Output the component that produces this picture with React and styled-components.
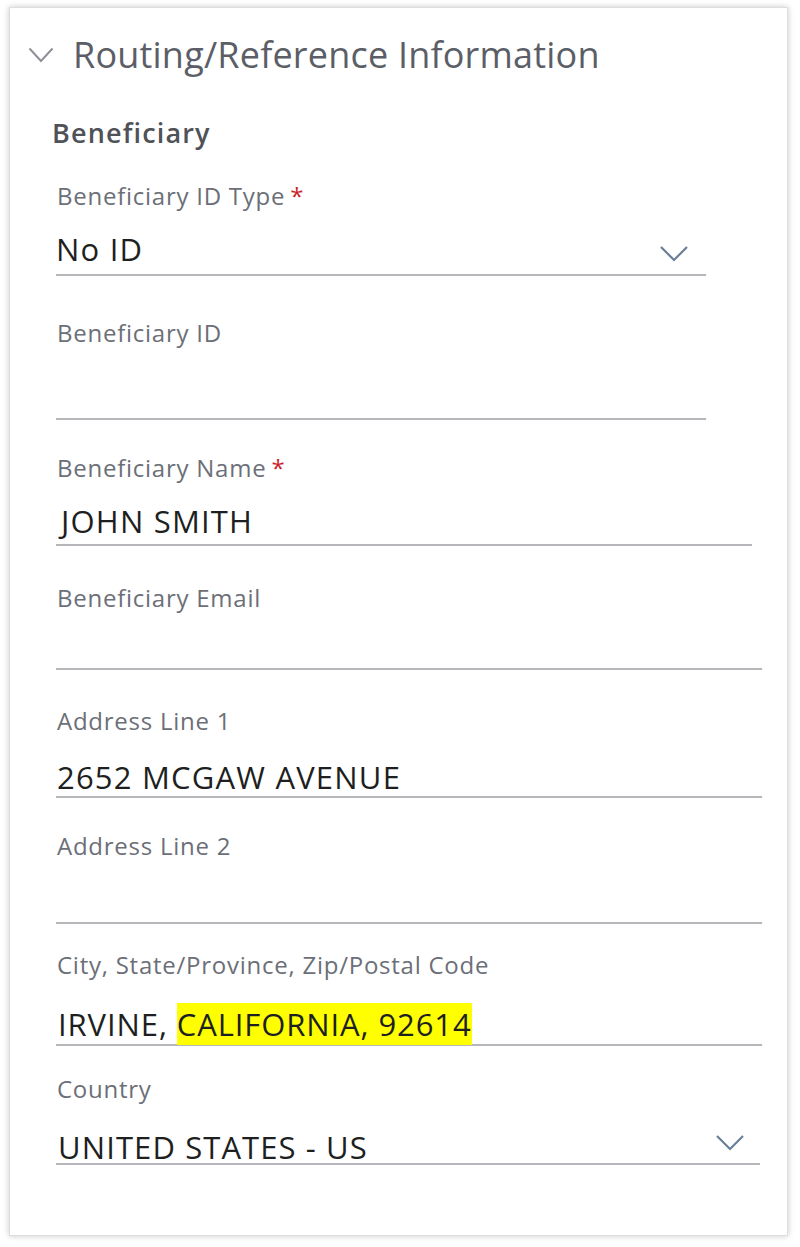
import React from 'react';
import styled, { createGlobalStyle } from 'styled-components';

const GlobalStyle = createGlobalStyle`
  html, body {
    margin: 0;
    padding: 0;
    background: #ffffff;
  }
  body {
    font-family: "Open Sans", "Noto Sans", sans-serif;
  }
`;

const Card = styled.section`
  box-sizing: border-box;
  width: 779px;
  margin: 7px 0 12px 9px;
  padding: 23px 0 70px 0;
  background: #ffffff;
  border: 1px solid #dedede;
  box-shadow: 0 0 6px rgba(0, 0, 0, 0.22);
`;

const Header = styled.div`
  display: flex;
  align-items: center;
  height: 48px;
  padding-left: 18px;
`;

const Toggle = styled.svg`
  width: 26px;
  height: 16px;
  flex-shrink: 0;
`;

const Title = styled.h1`
  margin: 0 0 0 19px;
  font-size: 36px;
  line-height: 48px;
  font-weight: 400;
  letter-spacing: 0.2px;
  color: #5b5e66;
`;

const Body = styled.div`
  padding-left: 46px;
`;

const Heading = styled.h2`
  margin: 36px 0 0 -4px;
  font-size: 27px;
  line-height: 36px;
  font-weight: 600;
  letter-spacing: 1.15px;
  color: #4f5257;
`;

const Field = styled.div`
  width: ${(p) => p.$width}px;
  margin-top: ${(p) => p.$gap}px;
`;

const Label = styled.div`
  padding-left: 1px;
  font-size: 24px;
  line-height: 30px;
  letter-spacing: 0.75px;
  color: #6c6f77;
`;

const Required = styled.span`
  color: #cc1f2d;
  margin-left: 5px;
`;

const InputRow = styled.div`
  display: flex;
  align-items: flex-end;
  justify-content: space-between;
  height: ${(p) => p.$height}px;
  border-bottom: 2px solid #b5b7bb;
`;

const Value = styled.div`
  font-size: 31px;
  line-height: 31px;
  letter-spacing: ${(p) => p.$spacing}px;
  color: #1e1f21;
  padding-bottom: ${(p) => p.$pad}px;
  padding-left: ${(p) => p.$indent || 0}px;
  white-space: nowrap;
`;

const Mark = styled.span`
  background: #ffff00;
`;

const Caret = styled.svg`
  width: 30px;
  height: 17px;
  margin: 0 ${(p) => p.$right}px 12px 0;
  flex-shrink: 0;
`;

const Chevron = ({ right }) => (
  <Caret $right={right} viewBox="0 0 30 17">
    <polyline points="2,2 15,15 28,2" fill="none" stroke="#6a8098" strokeWidth="2.2" />
  </Caret>
);

const fields = [
  { label: 'Beneficiary ID Type', required: true, value: 'No ID', select: true, width: 650, gap: 30, height: 63, pad: 9.5, caret: 17 },
  { label: 'Beneficiary ID', width: 650, gap: 42, height: 70 },
  { label: 'Beneficiary Name', required: true, value: 'JOHN SMITH', width: 696, gap: 33, height: 61, pad: 7.5, indent: 5 },
  { label: 'Beneficiary Email', width: 706, gap: 37, height: 55 },
  { label: 'Address Line 1', value: '2652 MCGAW AVENUE', width: 706, gap: 36, height: 60, pad: 3.5, indent: 1 },
  { label: 'Address Line 2', width: 706, gap: 33, height: 61 },
  {
    label: 'City, State/Province, Zip/Postal Code',
    value: (
      <>
        IRVINE, <Mark>CALIFORNIA, 92614</Mark>
      </>
    ),
    width: 706, gap: 26, height: 64, pad: 4.5, indent: 2, spacing: 0.9,
  },
  { label: 'Country', value: 'UNITED STATES - US', select: true, width: 704, gap: 28, height: 59, pad: 0.5, indent: 2, caret: 15, spacing: 1.1 },
];

export default function App() {
  return (
    <>
      <GlobalStyle />
      <Card>
        <Header>
          <Toggle viewBox="0 0 26 16">
            <polyline points="1.5,1.5 13,14 24.5,1.5" fill="none" stroke="#8d9096" strokeWidth="2" />
          </Toggle>
          <Title>Routing/Reference Information</Title>
        </Header>
        <Body>
          <Heading>Beneficiary</Heading>
          {fields.map((f) => (
            <Field key={f.label} $width={f.width} $gap={f.gap}>
              <Label>
                {f.label}
                {f.required && <Required>*</Required>}
              </Label>
              <InputRow $height={f.height}>
                <Value $pad={f.pad || 0} $indent={f.indent} $spacing={f.spacing ?? 1.2}>
                  {f.value}
                </Value>
                {f.select && <Chevron right={f.caret} />}
              </InputRow>
            </Field>
          ))}
        </Body>
      </Card>
    </>
  );
}
